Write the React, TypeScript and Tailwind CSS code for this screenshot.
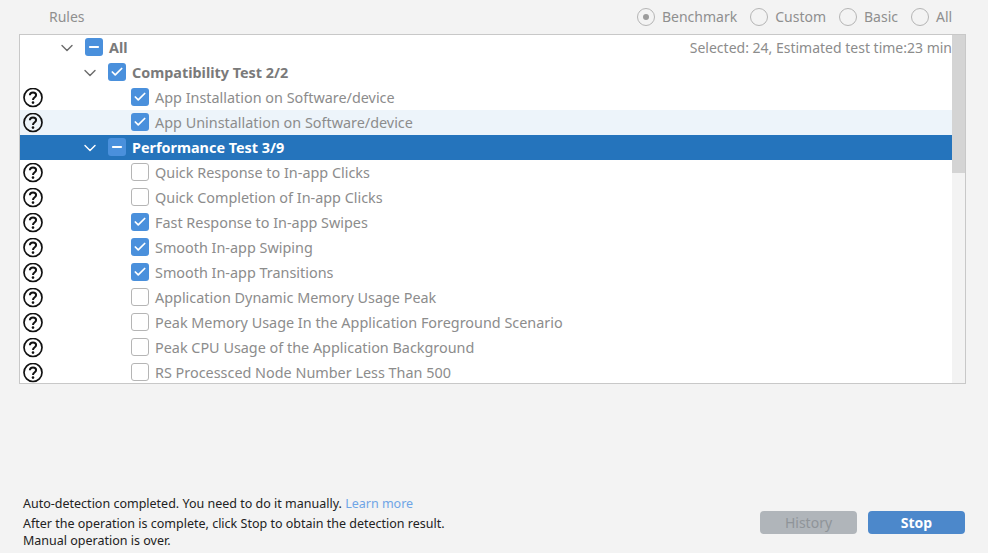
import { Check, ChevronDown, Minus } from 'lucide-react';

type CheckState = 'on' | 'off' | 'mixed';

interface RowData {
  label: string;
  level: 0 | 1 | 2;
  state: CheckState;
  hovered?: boolean;
  selected?: boolean;
}

const rows: RowData[] = [
  { label: 'All', level: 0, state: 'mixed' },
  { label: 'Compatibility Test 2/2', level: 1, state: 'on' },
  { label: 'App Installation on Software/device', level: 2, state: 'on' },
  { label: 'App Uninstallation on Software/device', level: 2, state: 'on', hovered: true },
  { label: 'Performance Test 3/9', level: 1, state: 'mixed', selected: true },
  { label: 'Quick Response to In-app Clicks', level: 2, state: 'off' },
  { label: 'Quick Completion of In-app Clicks', level: 2, state: 'off' },
  { label: 'Fast Response to In-app Swipes', level: 2, state: 'on' },
  { label: 'Smooth In-app Swiping', level: 2, state: 'on' },
  { label: 'Smooth In-app Transitions', level: 2, state: 'on' },
  { label: 'Application Dynamic Memory Usage Peak', level: 2, state: 'off' },
  { label: 'Peak Memory Usage In the Application Foreground Scenario', level: 2, state: 'off' },
  { label: 'Peak CPU Usage of the Application Background', level: 2, state: 'off' },
  { label: 'RS Processced Node Number Less Than 500', level: 2, state: 'off' },
];

function HelpIcon() {
  return (
    <svg width="20" height="20" viewBox="0 0 20 20" fill="none" className="mr-[88px] shrink-0">
      <circle cx="10" cy="9.5" r="9" stroke="#111" strokeWidth="1.7" />
      <path
        d="M6.9 7.3c0-1.7 1.3-2.9 3.1-2.9s3.1 1.1 3.1 2.7c0 1.2-.7 1.8-1.6 2.4-.9.6-1.4 1-1.4 2.1v.3"
        stroke="#111"
        strokeWidth="2"
      />
      <circle cx="10" cy="14.6" r="1.3" fill="#111" />
    </svg>
  );
}

function TreeCheck({ state }: { state: CheckState }) {
  if (state === 'off') {
    return <span className="-mt-px block size-[18px] shrink-0 rounded-[3px] border border-[#b5b5b5] bg-white" />;
  }
  return (
    <span className="-mt-px flex size-[18px] shrink-0 items-center justify-center rounded-[3px] bg-[#4a90dc] text-white">
      {state === 'on' ? <Check size={14} strokeWidth={3} /> : <Minus size={14} strokeWidth={3.5} />}
    </span>
  );
}

function TreeRow({ row, extra }: { row: RowData; extra?: string }) {
  const rowColor = row.selected ? 'bg-[#2574bc]' : row.hovered ? 'bg-[#edf4fa]' : 'bg-white';
  const labelColor = row.selected ? 'text-white font-bold' : row.level < 2 ? 'text-[#7a7a7a] font-bold' : 'text-[#8c8c8c]';
  const indent = row.level === 0 ? 'pl-[37px]' : row.level === 1 ? 'pl-[60px]' : 'pl-[3px]';

  return (
    <div className={`flex h-[25px] shrink-0 items-center ${indent} ${rowColor}`}>
      {row.level === 2 ? (
        <HelpIcon />
      ) : (
        <ChevronDown
          size={20}
          strokeWidth={1.7}
          className={`mr-[8px] shrink-0 ${row.selected ? 'text-white' : 'text-[#6d6d6d]'}`}
        />
      )}
      <TreeCheck state={row.state} />
      <span className={`ml-[6px] whitespace-nowrap text-[14.4px] ${labelColor}`}>{row.label}</span>
      {extra && <span className="ml-auto whitespace-nowrap text-[14px] text-[#8c8c8c]">{extra}</span>}
    </div>
  );
}

function ModeRadio({ label, active }: { label: string; active?: boolean }) {
  return (
    <span className="flex items-center gap-[7px] text-[14px] text-[#8f8f8f]">
      <span className="flex size-[18px] items-center justify-center rounded-full border border-[#b5b5b5]">
        {active && <span className="size-[6px] rounded-full bg-[#9c9c9c]" />}
      </span>
      <span className="min-w-[18px]">{label}</span>
    </span>
  );
}

export default function App() {
  return (
    <div className="flex h-[553px] w-[988px] flex-col overflow-hidden bg-[#f3f3f3] font-['Noto_Sans',sans-serif]">
      {/* Header */}
      <div className="flex h-[34px] shrink-0 items-center pb-[1px] pl-[49px] pr-[34px]">
        <span className="text-[14px] text-[#8f8f8f]">Rules</span>
        <div className="ml-auto flex items-center gap-[13px]">
          <ModeRadio label="Benchmark" active />
          <ModeRadio label="Custom" />
          <ModeRadio label="Basic" />
          <ModeRadio label="All" />
        </div>
      </div>

      {/* Rule tree */}
      <div className="ml-[19px] flex h-[350px] w-[947px] shrink-0 border border-[#c8c8c8] bg-white">
        <div className="flex min-w-0 flex-1 flex-col overflow-hidden">
          {rows.map((row, i) => (
            <TreeRow key={row.label} row={row} extra={i === 0 ? 'Selected: 24, Estimated test time:23 min' : undefined} />
          ))}
        </div>
        <div className="w-[13px] shrink-0 bg-[#f3f3f3]">
          <div className="h-[138px] bg-[#d4d4d4]" />
        </div>
      </div>

      {/* Footer */}
      <div className="flex flex-1 items-end justify-between pb-[4px] pl-[23px] pr-[23px]">
        <div className="text-[12.5px] leading-[17px] text-[#222]">
          <p className="mb-[3px]">
            Auto-detection completed. You need to do it manually.{' '}
            <span className="text-[#6fa5e6]">Learn more</span>
          </p>
          <p>After the operation is complete, click Stop to obtain the detection result.</p>
          <p>Manual operation is over.</p>
        </div>
        <div className="mb-[15px] flex gap-[11px]">
          <button className="h-[23px] w-[97px] rounded-[4px] bg-[#b0b5ba] text-[14px] text-[#8f9499]">History</button>
          <button className="h-[23px] w-[97px] rounded-[4px] bg-[#4c88cb] text-[14px] font-bold text-white">Stop</button>
        </div>
      </div>
    </div>
  );
}
